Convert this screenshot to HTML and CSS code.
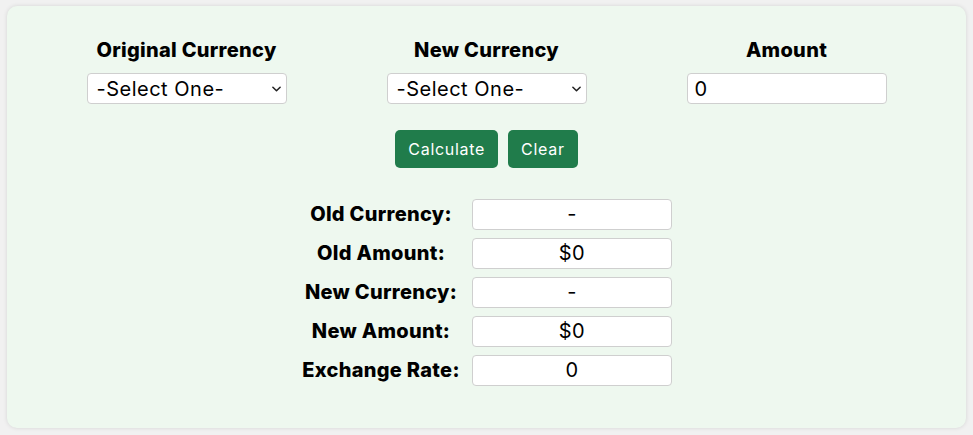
FILE: index.html
```html
<!DOCTYPE html>
<html>
<head>
<meta charset="utf-8">
<link rel="stylesheet" href="styles.css">
</head>
<body>
<div class="card">
  <div class="inputs">
    <div class="col">
      <h2 class="col-title">Original Currency</h2>
      <div class="select"><span>-Select One-</span><svg class="chev" viewBox="0 0 10 6" width="9" height="6"><path d="M1 1l4 4 4-4" fill="none" stroke="#222" stroke-width="1.7" stroke-linecap="round" stroke-linejoin="round"/></svg></div>
    </div>
    <div class="col">
      <h2 class="col-title">New Currency</h2>
      <div class="select"><span>-Select One-</span><svg class="chev" viewBox="0 0 10 6" width="9" height="6"><path d="M1 1l4 4 4-4" fill="none" stroke="#222" stroke-width="1.7" stroke-linecap="round" stroke-linejoin="round"/></svg></div>
    </div>
    <div class="col">
      <h2 class="col-title">Amount</h2>
      <div class="text-input">0</div>
    </div>
  </div>
  <div class="buttons">
    <button class="btn">Calculate</button>
    <button class="btn">Clear</button>
  </div>
  <div class="results">
    <div class="label">Old Currency:</div><div class="value">-</div>
    <div class="label">Old Amount:</div><div class="value">$0</div>
    <div class="label">New Currency:</div><div class="value">-</div>
    <div class="label">New Amount:</div><div class="value">$0</div>
    <div class="label">Exchange Rate:</div><div class="value">0</div>
  </div>
</div>
</body>
</html>
```
FILE: styles.css
```css
* { box-sizing: border-box; }
html, body { margin: 0; }
body {
  background: #f1f1f1;
  padding: 6px 7px;
  font-family: Inter, "Noto Sans", sans-serif;
  color: #000;
}
.card {
  width: 959px;
  height: 422px;
  background: #eef8ef;
  border-radius: 10px;
  box-shadow: 0 0 4px rgba(0,0,0,0.12);
  padding-top: 31px;
}
.inputs {
  display: flex;
  justify-content: center;
}
.col {
  width: 300px;
  display: flex;
  flex-direction: column;
  align-items: center;
}
.col-title {
  margin: 0 0 9px;
  font-size: 20px;
  line-height: 27px;
  font-weight: 800;
  letter-spacing: 0.3px;
}
.select, .text-input {
  width: 200px;
  height: 31px;
  background: #fff;
  border: 1px solid #cfcfcf;
  border-radius: 4px;
  display: flex;
  align-items: center;
  font-size: 20px;
  letter-spacing: 0.5px;
  padding: 0 5px 0 9px;
}
.select span { flex: 1; }
.chev { display: block; }
.text-input { padding-left: 7px; }
.buttons {
  display: flex;
  justify-content: center;
  gap: 10px;
  margin-top: 26px;
}
.btn {
  height: 38px;
  background: #207c4b;
  color: #fff;
  border: none;
  border-radius: 5px;
  font-family: inherit;
  font-size: 16px;
  letter-spacing: 0.7px;
  padding: 0 13px;
}
.results {
  display: grid;
  grid-template-columns: 160px 200px;
  column-gap: 11px;
  row-gap: 8px;
  justify-content: center;
  margin-top: 31px;
}
.label {
  text-align: center;
  font-weight: 800;
  font-size: 20px;
  letter-spacing: 0.3px;
  line-height: 31px;
  white-space: nowrap;
}
.value {
  height: 31px;
  background: #fff;
  border: 1px solid #cfcfcf;
  border-radius: 4px;
  text-align: center;
  font-size: 20px;
  letter-spacing: 0.5px;
  line-height: 29px;
}
```
